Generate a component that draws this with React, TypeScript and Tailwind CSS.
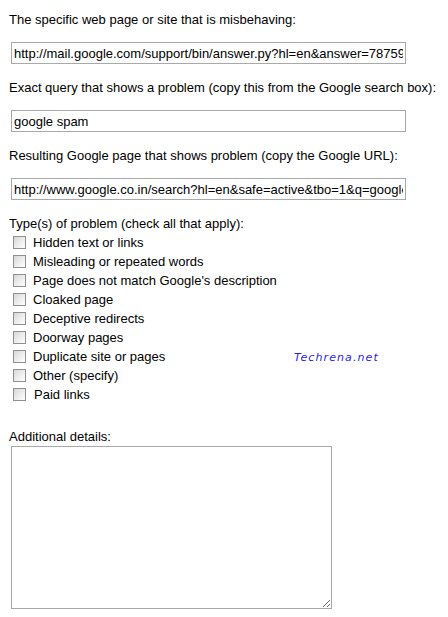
const problems = [
  "Hidden text or links",
  "Misleading or repeated words",
  "Page does not match Google's description",
  "Cloaked page",
  "Deceptive redirects",
  "Doorway pages",
  "Duplicate site or pages",
  "Other (specify)",
  "Paid links",
];

const fields = [
  {
    label: "The specific web page or site that is misbehaving:",
    value: "http://mail.google.com/support/bin/answer.py?hl=en&answer=78759",
  },
  {
    label: "Exact query that shows a problem (copy this from the Google search box):",
    value: "google spam",
  },
  {
    label: "Resulting Google page that shows problem (copy the Google URL):",
    value: "http://www.google.co.in/search?hl=en&safe=active&tbo=1&q=google+spam",
  },
];

const Checkbox = () => (
  <span className="block w-[13px] h-[13px] shrink-0 border border-[#8e8f8f] bg-gradient-to-br from-[#d8d8d8] via-[#ececec] to-[#ffffff]" />
);

export default function App() {
  return (
    <div className="w-[448px] h-[617px] bg-white text-black text-[13px] leading-[16px] font-['Liberation_Sans',Arial,sans-serif] pl-[9px] pt-[12px]">
      {/* Text fields */}
      {fields.map((field, index) => (
        <div key={index} className="mb-[16px]">
          <p className="whitespace-nowrap">{field.label}</p>
          <input
            readOnly
            defaultValue={field.value}
            className="mt-[14px] ml-[2px] block w-[395px] h-[22px] border border-[#a9a9a9] px-[2px] text-[13px] text-black font-['Liberation_Sans',Arial,sans-serif] outline-none"
          />
        </div>
      ))}

      {/* Problem types */}
      <p>Type(s) of problem (check all that apply):</p>
      <div className="relative mt-[1px]">
        {problems.map((problem, index) => (
          <div key={index} className="flex items-center h-[19px] pl-[4px]">
            <Checkbox />
            <span className={index === problems.length - 1 ? "ml-[8px]" : "ml-[7px]"}>
              {problem}
            </span>
          </div>
        ))}

        {/* Watermark */}
        <span className="absolute left-[285px] top-[119px] text-[11px] leading-[12px] italic tracking-[1.1px] text-[#2a1cf0] font-['DejaVu_Sans',sans-serif]">
          Techrena.net
        </span>
      </div>

      {/* Details */}
      <p className="mt-[25px]">Additional details:</p>
      <textarea className="mt-[1px] ml-[2px] block w-[321px] h-[163px] border border-[#a9a9a9] outline-none" />
    </div>
  );
}
